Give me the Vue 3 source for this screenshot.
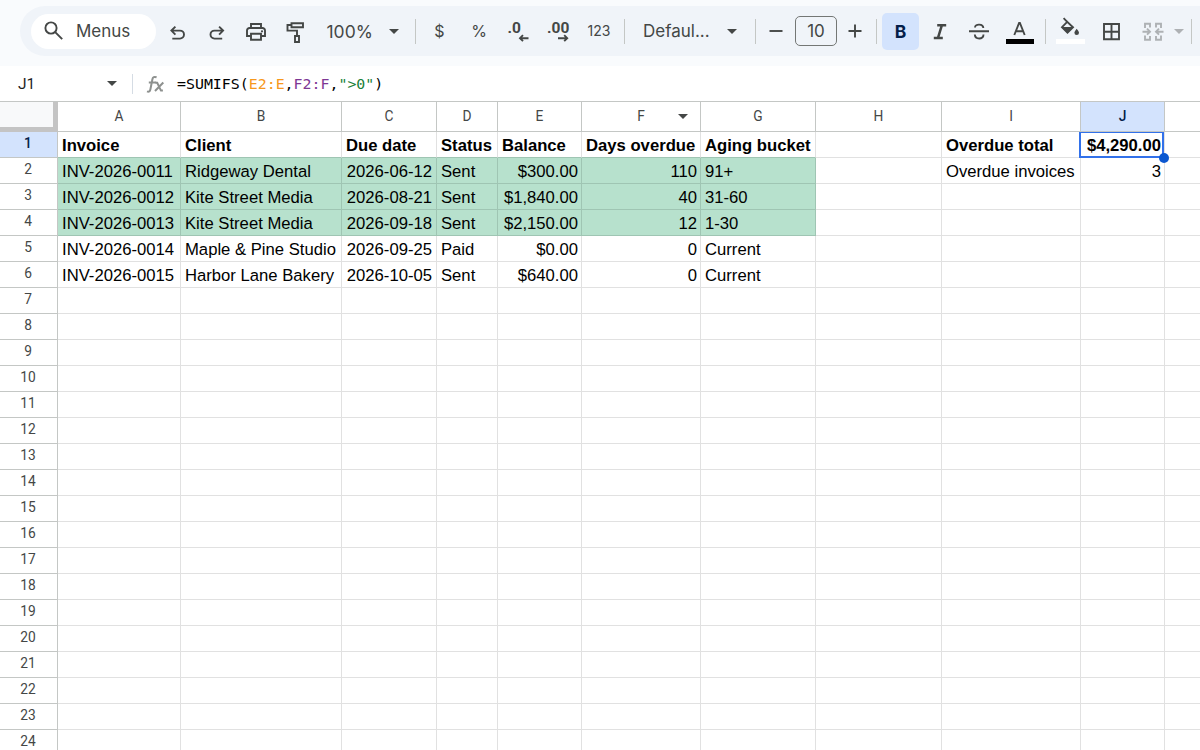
<template>
  <div class="sheet-app">
    <header class="toolbar-wrap">
      <div class="toolbar">
        <div class="menus">
          <svg class="icon" viewBox="0 0 24 24">
            <circle cx="9" cy="9" r="5.6" />
            <path d="M13.2 13.2l7 7" />
          </svg>
          <span>Menus</span>
        </div>

        <!-- history, print, paint format -->
        <div class="btn first">
          <svg class="icon" viewBox="0 0 24 24">
            <path d="M6.3 19.6H14a4 4 0 0 0 0-8H5.6M9.4 7.6l-4 4 4 4" />
          </svg>
        </div>
        <div class="btn">
          <svg class="icon" viewBox="0 0 24 24">
            <path d="M17.2 19.6H9.5a4 4 0 0 1 0-8h8.4M14.1 7.6l4 4-4 4" />
          </svg>
        </div>
        <div class="btn">
          <svg class="icon" viewBox="0 0 24 24">
            <path d="M7 9V5h10v4M6.5 17H3v-5.5A2.5 2.5 0 0 1 5.5 9h13a2.5 2.5 0 0 1 2.5 2.5V17H17.5" />
            <path d="M7 14.7h10v6.1H7z" />
            <circle class="solid" cx="18" cy="12.3" r="1.1" />
          </svg>
        </div>
        <div class="btn">
          <svg class="icon" viewBox="0 0 24 24">
            <path d="M8.5 4.2h11.5v4H8.5zM8.5 6H4.5v5.6h9.5v5.4M12 17h4v6h-4z" />
          </svg>
        </div>

        <div class="zoom">
          <span>100%</span>
          <i class="caret"></i>
        </div>
        <i class="sep"></i>

        <!-- number formats -->
        <div class="btn format currency">$</div>
        <div class="btn format percent">%</div>
        <div class="btn decimal">
          <svg class="icon" viewBox="0 0 24 24">
            <text x=".5" y="14">.0</text>
            <path d="M21.5 19.2h-8.5M16 16.2l-3 3 3 3" />
          </svg>
        </div>
        <div class="btn decimal">
          <svg class="icon" viewBox="0 0 24 24">
            <text x="0" y="14">.00</text>
            <path d="M11 19.2h9M17.2 16.2l3 3-3 3" />
          </svg>
        </div>
        <div class="btn format number">123</div>
        <i class="sep"></i>

        <div class="font-name">
          <span>Defaul...</span>
          <i class="caret"></i>
        </div>
        <i class="sep"></i>

        <!-- font size stepper -->
        <div class="stepper">
          <svg class="step" viewBox="0 0 14 14"><path d="M.5 7h13" /></svg>
          <div class="size">10</div>
          <svg class="step" viewBox="0 0 14 14"><path d="M-.5 7h13M6 .5v13" /></svg>
        </div>
        <i class="sep"></i>

        <!-- text style -->
        <div class="btn bold">B</div>
        <div class="btn italic">
          <svg class="icon" viewBox="0 0 24 24">
            <path d="M9.2 6.2h9M5.8 19.1h9M13.9 6.2l-4 12.9" />
          </svg>
        </div>
        <div class="btn">
          <svg class="icon strike" viewBox="0 0 24 24">
            <path d="M2 12.3h20M16.3 9c0-4.3-8.3-4.5-8.3-.5M7.8 15.5c.3 5.4 8.9 5.2 8.7 0" />
          </svg>
        </div>
        <div class="btn swatch">
          <svg class="icon" viewBox="0 0 24 24">
            <path d="M6.3 16L11.1 4h.8l4.8 12M7.8 12.3h7.4" />
          </svg>
          <i class="ink"></i>
        </div>
        <i class="sep after-color"></i>

        <div class="btn swatch fill">
          <svg class="icon" viewBox="0 0 24 24">
            <path d="M5.6-.8l3.6 3.6M9.2 2.8L4 8.2l5.5 5.5L15 8.2z" />
            <path class="solid" d="M4 8h11l-5.5 6.2zM18.7 9.8c1.3 1.6 2.3 3 2.3 4a2.3 2.3 0 0 1-4.6 0c0-1 1-2.4 2.3-4z" />
          </svg>
          <i class="ink white"></i>
        </div>
        <div class="btn borders">
          <svg class="icon" viewBox="0 0 24 24">
            <path d="M4 5h15v15.3H4zM11.5 5v15M4 12.7h15" />
          </svg>
        </div>
        <div class="btn merge">
          <svg class="icon" viewBox="0 0 24 24">
            <path d="M9 8.5V4.7H4v4.3M4 16.5v4.3h5V17M15 8.5V4.7h5v4.3M20 16.5v4.3h-5V17M1.5 12.7h7M6 9.7l3 3-3 3M22.5 12.7h-7M18 9.7l-3 3 3 3" />
          </svg>
          <i class="caret"></i>
        </div>
        <i class="sep last"></i>
      </div>
    </header>

    <div class="formula-bar">
      <div class="name-box">
        <span>J1</span>
        <i class="caret"></i>
      </div>
      <svg class="fx" viewBox="0 0 20 19">
        <path d="M2 17.4c2 .8 3-.1 3.4-2.1L7.4 5.2C7.8 3 9.2 2.5 11.6 3.3M3.8 8.5h7.4" />
        <path d="M10.5 8.8h1.7l3.8 7.8h1.9M18.3 8.5l-8.3 8.5" />
      </svg>
      <div class="formula">
        <span v-for="(t, i) in formula" :key="i" :class="t.kind">{{ t.text }}</span>
      </div>
    </div>

    <div class="grid">
      <div class="row head">
        <div class="corner"></div>
        <div
          v-for="c in columns"
          :key="c.name"
          :class="['col', { active: c.name === 'J' }]"
          :style="{ width: c.width + 'px' }"
        >
          {{ c.name }}
          <i v-if="c.name === 'F'" class="caret"></i>
        </div>
      </div>

      <div v-for="n in 24" :key="n" :class="['row', { title: n === 1 }]">
        <div :class="['num', { active: n === 1 }]">{{ n }}</div>
        <div
          v-for="(c, i) in columns"
          :key="c.name"
          :class="cellClass(n, i)"
          :style="{ width: c.width + 'px' }"
        >
          {{ cellText(n, i) }}
          <div v-if="n === 1 && c.name === 'J'" class="selection">
            <i class="handle"></i>
          </div>
        </div>
      </div>
    </div>
  </div>
</template>

<script setup>
const columns = [
  { name: 'A', width: 123 },
  { name: 'B', width: 161 },
  { name: 'C', width: 95 },
  { name: 'D', width: 61 },
  { name: 'E', width: 84 },
  { name: 'F', width: 119 },
  { name: 'G', width: 115 },
  { name: 'H', width: 126 },
  { name: 'I', width: 139 },
  { name: 'J', width: 84 },
  { name: '', width: 60 }
]

const rows = [
  ['Invoice', 'Client', 'Due date', 'Status', 'Balance', 'Days overdue', 'Aging bucket', '', 'Overdue total', '$4,290.00'],
  ['INV-2026-0011', 'Ridgeway Dental', '2026-06-12', 'Sent', '$300.00', '110', '91+', '', 'Overdue invoices', '3'],
  ['INV-2026-0012', 'Kite Street Media', '2026-08-21', 'Sent', '$1,840.00', '40', '31-60'],
  ['INV-2026-0013', 'Kite Street Media', '2026-09-18', 'Sent', '$2,150.00', '12', '1-30'],
  ['INV-2026-0014', 'Maple & Pine Studio', '2026-09-25', 'Paid', '$0.00', '0', 'Current'],
  ['INV-2026-0015', 'Harbor Lane Bakery', '2026-10-05', 'Sent', '$640.00', '0', 'Current']
]

const formula = [
  { text: '=SUMIFS(' },
  { text: 'E2:E', kind: 'orange' },
  { text: ',' },
  { text: 'F2:F', kind: 'purple' },
  { text: ',' },
  { text: '">0"', kind: 'green' },
  { text: ')' }
]

function cellText(n, i) {
  return rows[n - 1]?.[i] ?? ''
}

function cellClass(n, i) {
  return [
    'cell',
    {
      right: i === 9 || i === 2 || (n > 1 && (i === 4 || i === 5)),
      date: i === 2,
      overdue: n >= 2 && n <= 4 && i < 7,
      'above-overdue': n === 1 && i < 7
    }
  ]
}
</script>

<style>
body {
  margin: 0;
  overflow: hidden;
}
</style>

<style scoped>
.sheet-app {
  width: 1200px;
  height: 750px;
  overflow: hidden;
  background: #fff;
  color: #444746;
  font-family: Inter, Roboto, sans-serif;
}

.toolbar-wrap {
  height: 66px;
  box-sizing: border-box;
  padding: 6px 0 0 20px;
  background: #f9fbfd;
  overflow: hidden;
}

.toolbar {
  display: flex;
  align-items: center;
  width: 1220px;
  height: 50px;
  box-sizing: border-box;
  padding-left: 11px;
  border-radius: 25px;
  background: #f0f4f9;
}

.toolbar > * {
  flex: none;
}

.menus {
  display: flex;
  align-items: center;
  gap: 10px;
  width: 125px;
  height: 35px;
  box-sizing: border-box;
  padding-left: 11px;
  border-radius: 18px;
  background: #fff;
  font-size: 17px;
}

.icon {
  display: block;
  flex: none;
  width: 24px;
  height: 24px;
  overflow: visible;
  fill: none;
  stroke: #444746;
  stroke-width: 1.9;
}

.icon .solid {
  fill: #444746;
  stroke: none;
}

.icon text {
  fill: #444746;
  stroke: none;
  font: 700 15.5px Roboto, sans-serif;
}

.btn {
  display: flex;
  align-items: center;
  justify-content: center;
  width: 39px;
  height: 37px;
}

.btn.first {
  margin-left: 2.5px;
}

.caret {
  flex: none;
  width: 0;
  height: 0;
  border: 5px solid transparent;
  border-top-color: #444746;
  border-bottom: 0;
}

.sep {
  width: 1px;
  height: 25px;
  background: #c4c7c5;
}

.zoom {
  display: flex;
  align-items: center;
  justify-content: space-between;
  width: 72px;
  margin: 0 16.5px 0 12px;
  font-size: 17.5px;
}

.format {
  font-size: 16px;
}

.currency {
  margin-left: 4px;
}

.percent {
  width: 40px;
}

.decimal {
  width: 40px;
}

.number {
  width: 40px;
  margin-right: 5px;
  padding-bottom: 1px;
  box-sizing: border-box;
  font-size: 14px;
}

.font-name {
  display: flex;
  align-items: center;
  justify-content: space-between;
  width: 94px;
  margin: 0 18px;
  font-size: 17px;
}

.stepper {
  display: flex;
  align-items: center;
  gap: 12px;
  margin: 0 13px;
}

.step {
  width: 14px;
  height: 14px;
  overflow: visible;
  fill: none;
  stroke: #444746;
  stroke-width: 1.9;
}

.size {
  width: 42px;
  height: 30px;
  box-sizing: border-box;
  border: 1px solid #747775;
  border-radius: 5px;
  font-size: 17px;
  line-height: 28px;
  text-align: center;
}

.bold {
  width: 37px;
  margin-left: 5px;
  border-radius: 5px;
  background: #d3e3fd;
  color: #041e49;
  font-size: 17.5px;
  font-weight: 700;
}

.italic {
  margin-left: 1.5px;
}

.italic .icon {
  stroke-width: 2.5;
}

.swatch {
  position: relative;
  width: 42px;
  margin-left: 0.5px;
}

.ink {
  position: absolute;
  left: 7px;
  top: 26px;
  width: 28px;
  height: 5px;
  background: #000;
}

.ink.white {
  width: 29px;
  background: #fff;
}

.after-color {
  margin-left: 4px;
}

.fill {
  margin-left: 3px;
}

.borders {
  margin-left: 1.5px;
}

.merge {
  justify-content: flex-start;
  gap: 9px;
  width: 45px;
  margin-left: 9.5px;
  opacity: 0.38;
}

.last {
  margin-left: 4.5px;
}

.formula-bar {
  display: flex;
  align-items: center;
  height: 35px;
  background: #fff;
}

.name-box {
  display: flex;
  align-items: center;
  justify-content: space-between;
  width: 133px;
  height: 20px;
  box-sizing: border-box;
  padding: 0 15px 0 18px;
  border-right: 1px solid #d5dce4;
  color: #1f1f1f;
  font-family: Roboto, sans-serif;
  font-size: 15.5px;
}

.fx {
  width: 20px;
  height: 19px;
  margin: 0 12px;
  fill: none;
  stroke: #8e918f;
  stroke-width: 2;
}

.formula {
  color: #000;
  font: 14.9px/20px "DejaVu Sans Mono", monospace;
  white-space: pre;
}

.orange {
  color: #f7981d;
}

.purple {
  color: #7e3794;
}

.green {
  color: #188038;
}

.row {
  display: flex;
  width: 1225px;
  height: 26px;
}

.row > * {
  flex: none;
  box-sizing: border-box;
}

.head {
  height: 31px;
  box-sizing: border-box;
  border-top: 1px solid #c4c7c5;
}

.corner {
  width: 58px;
  border-right: 5px solid #c4c4c4;
  border-bottom: 5px solid #c4c4c4;
  background: #f8f9fa;
}

.col {
  position: relative;
  border-right: 1px solid #c4c7c5;
  border-bottom: 1px solid #c4c7c5;
  font: 13.75px/29px Roboto, sans-serif;
  text-align: center;
}

.col.active,
.num.active {
  background: #d3e3fd;
  color: #041e49;
  font-weight: 500;
}

.col .caret {
  position: absolute;
  right: 12px;
  top: 12px;
}

.num {
  width: 58px;
  padding-right: 1px;
  border-right: 1px solid #c4c7c5;
  border-bottom: 1px solid #c4c7c5;
  font: 13.75px/23px Roboto, sans-serif;
  text-align: center;
}

.cell {
  position: relative;
  padding: 1px 3px 0 4px;
  border-right: 1px solid #e1e1e1;
  border-bottom: 1px solid #e1e1e1;
  color: #000;
  font: 16.667px/25px "Liberation Sans", Arial, sans-serif;
  white-space: nowrap;
}

.title .cell {
  font-weight: 700;
}

.cell.right {
  text-align: right;
}

.cell.date {
  padding-right: 4px;
}

.title .cell.date {
  text-align: left;
}

.overdue {
  border-color: #9fc5b3;
  background: #b7e1cd;
}

.above-overdue {
  border-bottom-color: #9fc5b3;
}

.selection {
  position: absolute;
  z-index: 1;
  left: -2px;
  right: 0;
  top: 0;
  bottom: -1px;
  box-sizing: border-box;
  border: 2px solid #3271ea;
  border-top-width: 1px;
}

.handle {
  position: absolute;
  right: -7px;
  bottom: -7px;
  width: 10px;
  height: 10px;
  border-radius: 50%;
  background: #0b57d0;
}
</style>
